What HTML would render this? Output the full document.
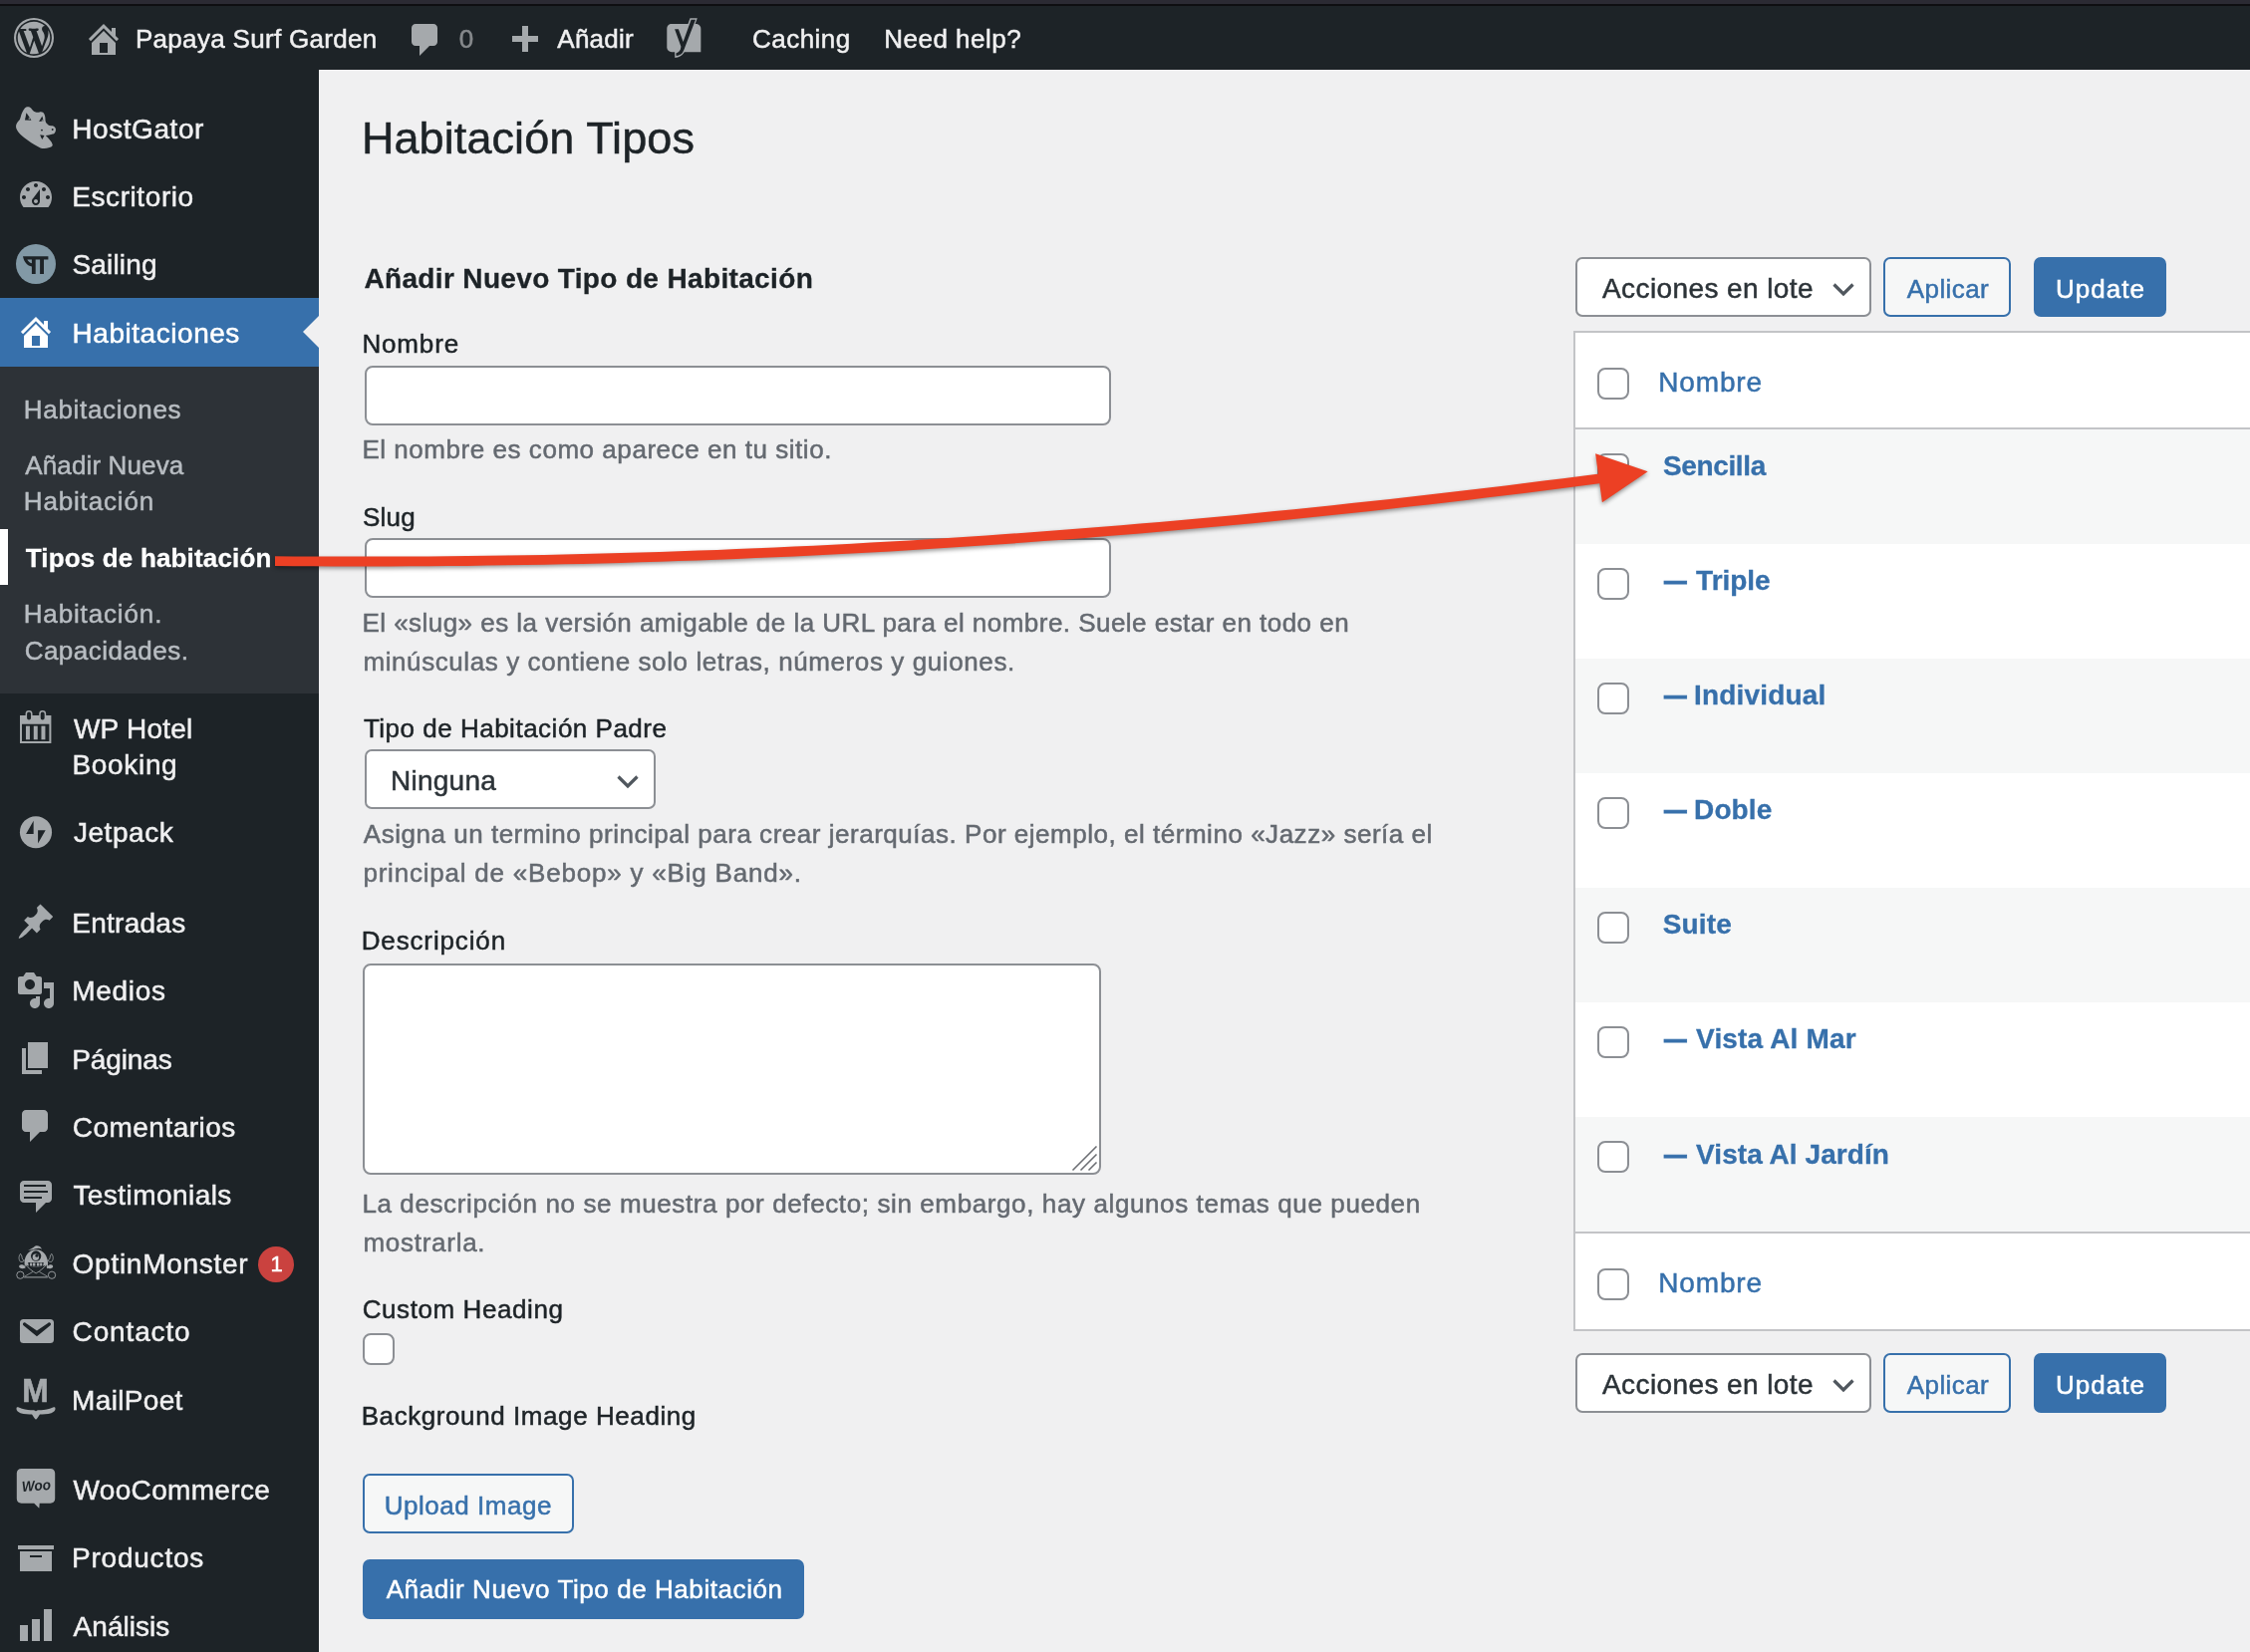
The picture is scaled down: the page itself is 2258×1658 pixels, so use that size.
<!DOCTYPE html>
<html lang="es">
<head>
<meta charset="utf-8">
<title>Habitación Tipos ‹ Papaya Surf Garden — WordPress</title>
<style>
*{box-sizing:border-box;margin:0;padding:0}
html{background:#f0f0f1}
body{width:2258px;height:1658px;overflow:hidden;background:#f0f0f1}
body{font-family:"Liberation Sans",sans-serif;position:relative}
.t{position:absolute;white-space:nowrap;display:block;-webkit-text-stroke:0.5px currentColor}
.k{font-weight:700;-webkit-text-stroke-width:0.3px}
.b{position:absolute}
svg{position:absolute;display:block;overflow:visible}
.ic{fill:#a5a9ac}
.inp{background:#fff;border:2px solid #8c8f94;border-radius:8px}
.sel{background:#fff;border:2px solid #8c8f94;border-radius:7px}
.cb{background:#fff;border:2px solid #8c8f94;border-radius:8px}
.btn{border:2px solid #3770ab;border-radius:7px;background:#f6f7f7}
.pri{border:2px solid #3770ab;border-radius:7px;background:#3770ab}
</style>
</head>
<body>
<div id="wpwrap" style="position:absolute;left:0;top:0;width:2258px;height:1658px;overflow:hidden;will-change:transform">

<div class="b" style="left:0px;top:0px;width:2258px;height:4px;background:#2b2a33"></div>
<div class="b" style="left:0px;top:4px;width:2258px;height:2px;background:#0e0e11"></div>
<div id="wpadminbar" class="b" style="left:0;top:6px;width:2258px;height:64px;background:#1d2327"></div>
<div id="adminmenuback" class="b" style="left:0;top:70px;width:320px;height:1588px;background:#1d2327"></div>
<div class="b" style="left:0px;top:299px;width:320px;height:69px;background:#3770ab"></div>
<div class="b" style="left:0px;top:368px;width:320px;height:328px;background:#2d3237"></div>
<div class="b" style="left:0px;top:531px;width:8px;height:56px;background:#fff"></div>
<div class="b" style="left:288px;top:317px;width:0;height:0;border:16px solid transparent;border-right-color:#f0f0f1"></div>
<svg viewBox="0 0 20 20" style="left:14px;top:18px;width:40px;height:40px;fill:#a5a9ac"><path fill-rule="evenodd" d="M10 0a10 10 0 1 0 0 20a10 10 0 1 0 0-20zM10 1.05a8.95 8.95 0 1 1 0 17.9a8.95 8.95 0 1 1 0-17.9z"/><g transform="translate(10 10) scale(0.915) translate(-10 -10)"><path d="M7.78 15.37L4.37 6.22c.55-.02 1.17-.08 1.17-.08.5-.06.44-1.13-.06-1.11 0 0-1.45.11-2.37.11-.18 0-.37 0-.58-.01C4.12 2.69 6.87 1.11 10 1.11c2.33 0 4.45.87 6.05 2.34-.68-.11-1.65.39-1.65 1.58 0 .74.45 1.36.9 2.1.35.61.55 1.36.55 2.46 0 1.49-1.4 5-1.4 5l-3.03-8.37c.54-.02.82-.17.82-.17.5-.05.44-1.25-.06-1.22 0 0-1.44.12-2.38.12-.87 0-2.33-.12-2.33-.12-.5-.03-.56 1.2-.06 1.22l.92.08 1.26 3.41zM17.41 10c.24-.64.74-1.87.43-4.25.7 1.29 1.05 2.71 1.05 4.25 0 3.29-1.73 6.24-4.4 7.78.97-2.59 1.94-5.2 2.92-7.78zM6.1 18.09C3.12 16.65 1.11 13.53 1.11 10c0-1.3.23-2.48.72-3.59C3.25 10.3 4.67 14.2 6.1 18.09zm4.03-6.63l2.58 6.98c-.86.29-1.76.45-2.71.45-.79 0-1.57-.11-2.29-.33.81-2.38 1.62-4.74 2.42-7.1z"/></g></svg>
<svg viewBox="0 0 20 20" style="left:84px;top:18.6px;width:40px;height:40px;fill:#a5a9ac"><path d="M16 8.5l1.53 1.53-1.06 1.06L10 4.62l-6.47 6.47-1.06-1.06L10 2.5l4 4v-2h2v4zm-6-2.46l6 5.99V18H4v-5.97zM12 17v-5H8v5h4z"/></svg>
<svg viewBox="0 0 20 20" style="left:407.4px;top:19.7px;width:40px;height:40px;fill:#a5a9ac"><path d="M5 2h9c1.1 0 2 .9 2 2v7c0 1.1-.9 2-2 2h-2l-5 5v-5H5c-1.1 0-2-.9-2-2V4c0-1.1.9-2 2-2z"/></svg>
<svg viewBox="0 0 20 20" style="left:505.6px;top:22px;width:40px;height:40px;fill:#a5a9ac"><path d="M17 7v3h-5v5H9v-5H4V7h5V2h3v5h5z"/></svg>
<svg viewBox="0 0 34.4 40.4" style="left:668.8px;top:17.8px;width:34.4px;height:40.4px;fill:#a5a9ac"><path d="M4.9 6.05H29.6C32.3 6.05 34.35 8.2 34.35 10.9V34.15H5.1C2.4 34.15 0.28 32 0.28 29.3V10.7C0.28 8.1 2.3 6.05 4.9 6.05Z"/><path d="M23.5 0.2L30.8 0.2L20.2 28.8C19 32 18 34 17 35.5C15 38 12.5 39.5 8.3 40L8.1 34.3L13 30L15 24Z"/><path d="M24.6 1.8L29 1.8L18.8 28.3C17.9 31 16.9 33.2 15.9 34.9C14.3 36.6 12.3 37.5 9.6 38.1L9.4 35.4C11.5 34.8 13 33.5 13.9 31.5L14.4 28.7L8.1 11.3L11.9 11.3L16.6 24Z" fill="#1d2327"/></svg>
<svg viewBox="275 240 1100 1165" style="left:16px;top:106.7px;width:40px;height:42.3px;fill:#a5a9ac"><path d="M275 770C280 720 330 650 380 600C400 560 410 510 420 470C440 410 470 340 520 280C560 240 640 230 690 280C710 300 725 325 740 340C760 365 780 380 800 385C830 395 870 405 900 400C920 385 980 370 1020 400C1050 425 1070 470 1080 520C1088 560 1085 610 1090 640C1095 665 1105 685 1120 700C1150 730 1180 755 1200 760C1230 768 1265 765 1290 770C1320 778 1340 795 1350 810C1370 835 1378 860 1375 880C1375 910 1365 940 1350 960C1335 985 1310 1000 1290 1000C1230 1020 1160 1035 1100 1040C1140 1075 1170 1110 1200 1150C1230 1185 1260 1220 1270 1250C1290 1290 1290 1310 1280 1320C1260 1350 1230 1365 1200 1370C1150 1390 1100 1400 1050 1400C1010 1400 980 1395 950 1380C900 1360 850 1330 800 1300C730 1260 660 1215 600 1170C530 1120 460 1065 400 1010C360 970 325 925 300 880C280 845 272 805 275 770Z"/><path d="M560 410C600 460 660 540 700 620L520 610C540 540 550 470 560 410ZM1000 500C1015 545 1025 590 1030 640L910 650C940 600 970 550 1000 500ZM940 1020L1060 1040L1000 1150C975 1110 955 1065 940 1020ZM1100 1045L1320 1025C1310 1065 1290 1100 1260 1125C1210 1095 1150 1070 1100 1045Z" fill="#1d2327"/><circle cx="990" cy="890" r="26" fill="#1d2327"/><circle cx="1285" cy="875" r="26" fill="#1d2327"/><circle cx="640" cy="570" r="22"/><circle cx="1000" cy="625" r="18"/></svg>
<svg style="left:16px;top:176px;width:40px;height:40px;fill:#a5a9ac" viewBox="0 0 20 20"><path d="M3.76 16h12.48c1.1-1.37 1.76-3.11 1.76-5 0-4.42-3.58-8-8-8s-8 3.58-8 8c0 1.89.66 3.63 1.76 5zM10 4c.55 0 1 .45 1 1s-.45 1-1 1-1-.45-1-1 .45-1 1-1zM6 6c.55 0 1 .45 1 1s-.45 1-1 1-1-.45-1-1 .45-1 1-1zm8 0c.55 0 1 .45 1 1s-.45 1-1 1-1-.45-1-1 .45-1 1-1zm-5.37 5.55L12 7v6c0 1.1-.9 2-2 2s-2-.9-2-2c0-.57.24-1.08.63-1.45zM4 10c.55 0 1 .45 1 1s-.45 1-1 1-1-.45-1-1 .45-1 1-1zm12 0c.55 0 1 .45 1 1s-.45 1-1 1-1-.45-1-1 .45-1 1-1zm-5 3c0-.55-.45-1-1-1s-1 .45-1 1 .45 1 1 1 1-.45 1-1z"/></svg>
<svg viewBox="0 0 40 40" style="left:16px;top:244.8px;width:40px;height:40px"><circle cx="20" cy="20" r="20" fill="#8299a6"/><path d="M7 12.3H32.4V15.6H28V30.1H24.1V15.6H19.7V30.1H15.9V22.6C11.5 21.8 8 18 7 12.3ZM11.4 15.6C12.2 17.4 13.8 18.8 15.9 19.3V15.6Z" fill="#1d2327" fill-rule="evenodd"/></svg>
<svg style="left:16px;top:313px;width:40px;height:40px;fill:#fff" viewBox="0 0 20 20"><path d="M16 8.5l1.53 1.53-1.06 1.06L10 4.62l-6.47 6.47-1.06-1.06L10 2.5l4 4v-2h2v4zm-6-2.46l6 5.99V18H4v-5.97zM12 17v-5H8v5h4z"/></svg>
<svg viewBox="157 174 253 266" style="left:20.3px;top:713px;width:31.4px;height:33px;fill:#a5a9ac"><path d="M157 215H410V440H157ZM173 285V424H394V285Z" fill-rule="evenodd"/><rect x="205" y="300" width="32" height="110"/><rect x="268" y="300" width="32" height="110"/><rect x="330" y="300" width="32" height="110"/><rect x="208" y="180" width="44" height="76" rx="22" fill="#1d2327" stroke="#a5a9ac" stroke-width="12"/><rect x="318" y="180" width="44" height="76" rx="22" fill="#1d2327" stroke="#a5a9ac" stroke-width="12"/></svg>
<svg viewBox="157 1013 253 255" style="left:20px;top:818.7px;width:32px;height:32.4px;fill:#a5a9ac"><circle cx="283.5" cy="1140.5" r="127"/><path d="M265 1050V1155H205ZM300 1125H360L300 1230Z" fill="#1d2327"/></svg>
<svg style="left:16px;top:905px;width:40px;height:40px;fill:#a5a9ac" viewBox="0 0 20 20"><path d="M10.44 3.02l1.82-1.82 6.36 6.35-1.83 1.82c-1.05-.68-2.48-.57-3.41.36l-.75.75c-.92.93-1.04 2.35-.35 3.41l-1.83 1.82-2.41-2.41-2.8 2.79c-.42.42-3.38 2.71-3.8 2.29s1.86-3.39 2.28-3.81l2.79-2.79L4.1 9.36l1.83-1.82c1.05.69 2.48.57 3.4-.36l.75-.75c.93-.92 1.05-2.35.36-3.41z"/></svg>
<svg style="left:16px;top:974px;width:40px;height:40px;fill:#a5a9ac" viewBox="0 0 20 20"><path d="M13 11V4c0-.55-.45-1-1-1h-1.67L9 1H5L3.67 3H2c-.55 0-1 .45-1 1v7c0 .55.45 1 1 1h10c.55 0 1-.45 1-1zM7 4.5c1.38 0 2.5 1.12 2.5 2.5S8.38 9.5 7 9.5 4.5 8.38 4.5 7 5.62 4.5 7 4.5zM14 6h5v10.5c0 1.38-1.12 2.5-2.5 2.5S14 17.88 14 16.5s1.12-2.5 2.5-2.5c.17 0 .34.02.5.05V9h-3V6zm-4 8.05V13h2v3.5c0 1.38-1.12 2.5-2.5 2.5S7 17.88 7 16.5 8.12 14 9.5 14c.17 0 .34.02.5.05z"/></svg>
<svg style="left:16px;top:1042px;width:40px;height:40px;fill:#a5a9ac" viewBox="0 0 20 20"><path d="M6 15V2h10v13H6zm-1 1h8v2H3V5h2v11z"/></svg>
<svg style="left:16px;top:1110px;width:40px;height:40px;fill:#a5a9ac" viewBox="0 0 20 20"><path d="M5 2h9c1.1 0 2 .9 2 2v7c0 1.1-.9 2-2 2h-2l-5 5v-5H5c-1.1 0-2-.9-2-2V4c0-1.1.9-2 2-2z"/></svg>
<svg style="left:16px;top:1179px;width:40px;height:40px;fill:#a5a9ac" viewBox="0 0 20 20"><path d="M4 3h12c.55 0 1.02.2 1.41.59S18 4.45 18 5v7c0 .55-.2 1.02-.59 1.41S16.55 14 16 14h-1l-5 5v-5H4c-.55 0-1.02-.2-1.41-.59S2 12.55 2 12V5c0-.55.2-1.02.59-1.41S3.45 3 4 3zm11 2H4v1h11V5zm1 3H4v1h12V8zm-3 3H4v1h9v-1z"/></svg>
<svg viewBox="275 330 1110 940" style="left:16px;top:1250px;width:40.3px;height:34.1px;fill:#a5a9ac"><path d="M610 470C700 420 760 390 800 350C860 320 950 340 990 430C940 400 880 395 820 420C760 440 690 460 610 470Z"/><path d="M520 900C480 740 560 450 830 450C1100 450 1190 740 1150 900C1230 830 1300 860 1300 910C1300 960 1230 990 1150 960L1100 1000H560L520 960C440 990 360 960 360 910C360 860 440 830 520 900Z"/><path d="M400 560C350 620 340 720 400 780C450 790 490 770 510 740C470 740 440 700 440 640C430 610 420 580 400 560Z" fill="#1d2327" stroke="#a5a9ac" stroke-width="22" stroke-linejoin="round"/><path d="M1260 560C1310 620 1320 720 1260 780C1210 790 1170 770 1150 740C1190 740 1220 700 1220 640C1230 610 1240 580 1260 560Z" fill="#1d2327" stroke="#a5a9ac" stroke-width="22" stroke-linejoin="round"/><circle cx="830" cy="620" r="142" fill="#1d2327"/><circle cx="822" cy="655" r="88"/><circle cx="852" cy="612" r="42" fill="#1d2327"/><path d="M610 800H1040L1020 910H630Z" fill="#1d2327"/><rect x="662" y="812" width="60" height="86"/><rect x="742" y="812" width="68" height="86"/><rect x="852" y="812" width="68" height="86"/><rect x="940" y="812" width="58" height="86"/><path d="M540 870C600 900 700 915 830 915C960 915 1060 900 1120 870L1150 1190H500Z" fill="#1d2327"/><path d="M545 870C620 950 720 1040 830 1100C940 1040 1040 950 1115 870" fill="none" stroke="#a5a9ac" stroke-width="22"/><path d="M510 1190L740 1060M1150 1190L920 1060" fill="none" stroke="#a5a9ac" stroke-width="20"/><path d="M500 1210H1150" fill="none" stroke="#a5a9ac" stroke-width="28"/><circle cx="395" cy="1150" r="100" fill="#1d2327" stroke="#a5a9ac" stroke-width="24"/><circle cx="1268" cy="1150" r="100" fill="#1d2327" stroke="#a5a9ac" stroke-width="24"/></svg>
<svg style="left:16px;top:1316px;width:40px;height:40px;fill:#a5a9ac" viewBox="0 0 20 20"><path d="M3.87 4h13.25C18.37 4 19 4.59 19 5.79v8.42c0 1.19-.63 1.79-1.88 1.79H3.87c-1.25 0-1.88-.6-1.88-1.79V5.79c0-1.2.63-1.79 1.88-1.79zm6.62 8.6l6.74-5.53c.24-.2.43-.66.13-1.07-.29-.41-.82-.42-1.17-.17l-5.7 3.86L4.8 5.83c-.35-.25-.88-.24-1.17.17-.3.41-.11.87.13 1.07z"/></svg>
<svg viewBox="0 0 40 48" style="left:16px;top:1378px;width:40px;height:48px;fill:#a5a9ac"><text x="19.6" y="28.8" text-anchor="middle" font-family="Liberation Sans,sans-serif" font-weight="700" font-size="32.5" textLength="26.5" stroke="#a5a9ac" stroke-width="0.6" lengthAdjust="spacingAndGlyphs">M</text><path d="M0.5 35.5C0.5 34.5 1.5 34 2.8 34.6C8 37 13 37.5 17 37.2C18.6 37.2 19.6 37.8 20 38.6C20.4 37.8 21.4 37.2 23 37.2C27 37.5 32 37 37.2 34.6C38.5 34 39.5 34.5 39.5 35.5C39.8 37.5 38 39.3 35.5 40.2C31.5 41.5 27 41.3 24 41.5C22.5 43.5 21.5 45.5 20 46.8C18.5 45.5 17.5 43.5 16 41.5C13 41.3 8.5 41.5 4.5 40.2C2 39.3 0.2 37.5 0.5 35.5Z"/></svg>
<svg viewBox="0 0 40 42" style="left:16px;top:1473px;width:40px;height:42px;fill:#a5a9ac"><path d="M5.5 0.9H34.5C37.3 0.9 39.2 2.8 39.2 5.6V31C39.2 33.8 37.3 35.7 34.5 35.7H23.7L23.3 40.8L18.2 35.7H5.5C2.7 35.7 0.8 33.8 0.8 31V5.6C0.8 2.8 2.7 0.9 5.5 0.9Z"/><text x="20.3" y="23" text-anchor="middle" font-family="Liberation Sans,sans-serif" font-weight="700" font-style="italic" font-size="14.5" fill="#1d2327" textLength="29" lengthAdjust="spacingAndGlyphs" transform="rotate(-4 20 18)">Woo</text></svg>
<svg style="left:16px;top:1543px;width:40px;height:40px;fill:#a5a9ac" viewBox="0 0 20 20"><path d="M19 4v2H1V4h18zM2 7h16v10H2V7zm11 3V9H7v1h6z"/></svg>
<svg style="left:16px;top:1611px;width:40px;height:40px;fill:#a5a9ac" viewBox="0 0 20 20"><path d="M18 18V2h-4v16h4zm-6 0V7H8v11h4zm-6 0v-8H2v8h4z"/></svg>
<div class="b" style="left:259px;top:1251px;width:36px;height:36px;background:#ca423f;border-radius:18px"></div>
<div class="b inp" style="left:366px;top:367px;width:749px;height:60px;"></div>
<div class="b inp" style="left:366px;top:540px;width:749px;height:60px;"></div>
<div class="b sel" style="left:366px;top:752px;width:292px;height:60px;"></div>
<div class="b inp" style="left:364px;top:967px;width:741px;height:212px;"></div>
<div class="b cb" style="left:364px;top:1338px;width:32px;height:32px;"></div>
<div class="b btn" style="left:364px;top:1479px;width:212px;height:60px;"></div>
<div class="b pri" style="left:364px;top:1565px;width:443px;height:60px;"></div>
<svg viewBox="0 0 22 13" style="left:619px;top:777.5px;width:22px;height:13px"><path d="M1.5 1.5L11 11L20.5 1.5" fill="none" stroke="#50575e" stroke-width="3.2"/></svg>
<svg viewBox="0 0 26 26" style="left:1076px;top:1150px;width:26px;height:26px"><path d="M0.5 24.5L24.5 0.5M8.5 24.5L24.5 8.5M16.5 24.5L24.5 16.5" fill="none" stroke="#6b6e73" stroke-width="1.6"/></svg>
<div class="b sel" style="left:1581px;top:258px;width:297px;height:60px;"></div>
<svg viewBox="0 0 22 13" style="left:1839px;top:283.5px;width:22px;height:13px"><path d="M1.5 1.5L11 11L20.5 1.5" fill="none" stroke="#50575e" stroke-width="3.2"/></svg>
<div class="b btn" style="left:1890px;top:258px;width:128px;height:60px;"></div>
<div class="b pri" style="left:2041px;top:258px;width:133px;height:60px;"></div>
<div class="b sel" style="left:1581px;top:1358px;width:297px;height:60px;"></div>
<svg viewBox="0 0 22 13" style="left:1839px;top:1383.5px;width:22px;height:13px"><path d="M1.5 1.5L11 11L20.5 1.5" fill="none" stroke="#50575e" stroke-width="3.2"/></svg>
<div class="b btn" style="left:1890px;top:1358px;width:128px;height:60px;"></div>
<div class="b pri" style="left:2041px;top:1358px;width:133px;height:60px;"></div>
<div class="b" style="left:1579px;top:332px;width:721px;height:1004px;background:#fff;border:2px solid #c3c4c7"></div>
<div class="b" style="left:1581px;top:430px;width:719px;height:116px;background:#f6f7f7"></div>
<div class="b" style="left:1581px;top:661px;width:719px;height:115px;background:#f6f7f7"></div>
<div class="b" style="left:1581px;top:891px;width:719px;height:115px;background:#f6f7f7"></div>
<div class="b" style="left:1581px;top:1121px;width:719px;height:115px;background:#f6f7f7"></div>
<div class="b" style="left:1581px;top:429px;width:719px;height:2px;background:#c3c4c7"></div>
<div class="b" style="left:1581px;top:1236px;width:719px;height:2px;background:#c3c4c7"></div>
<div class="b cb" style="left:1603px;top:369px;width:32px;height:32px;"></div>
<div class="b cb" style="left:1603px;top:1273px;width:32px;height:32px;"></div>
<div class="b cb" style="left:1603px;top:455px;width:32px;height:32px;"></div>
<div class="b cb" style="left:1603px;top:570px;width:32px;height:32px;"></div>
<div class="b cb" style="left:1603px;top:685px;width:32px;height:32px;"></div>
<div class="b cb" style="left:1603px;top:800px;width:32px;height:32px;"></div>
<div class="b cb" style="left:1603px;top:915px;width:32px;height:32px;"></div>
<div class="b cb" style="left:1603px;top:1030px;width:32px;height:32px;"></div>
<div class="b cb" style="left:1603px;top:1145px;width:32px;height:32px;"></div>
<span class="t" style="left:135.90px;top:26px;font-size:26px;line-height:26px;color:#f0f0f1;letter-spacing:0.317px">Papaya Surf Garden</span>
<span class="t" style="left:460.80px;top:26px;font-size:26px;line-height:26px;color:#86898c;letter-spacing:0.000px">0</span>
<span class="t" style="left:559.30px;top:26px;font-size:26px;line-height:26px;color:#f0f0f1;letter-spacing:0.240px">Añadir</span>
<span class="t" style="left:755.10px;top:26px;font-size:26px;line-height:26px;color:#f0f0f1;letter-spacing:0.449px">Caching</span>
<span class="t" style="left:887.20px;top:26px;font-size:26px;line-height:26px;color:#f0f0f1;letter-spacing:0.500px">Need help?</span>
<span class="t" style="left:72.20px;top:116px;font-size:28px;line-height:28px;color:#f0f0f1;letter-spacing:0.575px">HostGator</span>
<span class="t" style="left:72.20px;top:184px;font-size:28px;line-height:28px;color:#f0f0f1;letter-spacing:0.589px">Escritorio</span>
<span class="t" style="left:72.50px;top:252px;font-size:28px;line-height:28px;color:#f0f0f1;letter-spacing:0.167px">Sailing</span>
<span class="t" style="left:72.50px;top:321px;font-size:28px;line-height:28px;color:#fff;letter-spacing:0.545px">Habitaciones</span>
<span class="t" style="left:23.80px;top:398px;font-size:26px;line-height:26px;color:#b8bdc2;letter-spacing:0.682px">Habitaciones</span>
<span class="t" style="left:25.30px;top:454px;font-size:26px;line-height:26px;color:#b8bdc2;letter-spacing:0.128px">Añadir Nueva</span>
<span class="t" style="left:23.80px;top:490px;font-size:26px;line-height:26px;color:#b8bdc2;letter-spacing:0.833px">Habitación</span>
<span class="t k" style="left:25.70px;top:547px;font-size:26px;line-height:26px;color:#fff;letter-spacing:0.172px">Tipos de habitación</span>
<span class="t" style="left:23.70px;top:603px;font-size:26px;line-height:26px;color:#b8bdc2;letter-spacing:0.860px">Habitación.</span>
<span class="t" style="left:24.70px;top:640px;font-size:26px;line-height:26px;color:#b8bdc2;letter-spacing:0.472px">Capacidades.</span>
<span class="t" style="left:73.90px;top:718px;font-size:28px;line-height:28px;color:#f0f0f1;letter-spacing:0.229px">WP Hotel</span>
<span class="t" style="left:72.50px;top:754px;font-size:28px;line-height:28px;color:#f0f0f1;letter-spacing:0.667px">Booking</span>
<span class="t" style="left:73.90px;top:822px;font-size:28px;line-height:28px;color:#f0f0f1;letter-spacing:0.551px">Jetpack</span>
<span class="t" style="left:72.20px;top:913px;font-size:28px;line-height:28px;color:#f0f0f1;letter-spacing:0.272px">Entradas</span>
<span class="t" style="left:72.20px;top:981px;font-size:28px;line-height:28px;color:#f0f0f1;letter-spacing:0.720px">Medios</span>
<span class="t" style="left:72.20px;top:1050px;font-size:28px;line-height:28px;color:#f0f0f1;letter-spacing:-0.100px">Páginas</span>
<span class="t" style="left:72.80px;top:1118px;font-size:28px;line-height:28px;color:#f0f0f1;letter-spacing:0.470px">Comentarios</span>
<span class="t" style="left:73.40px;top:1186px;font-size:28px;line-height:28px;color:#f0f0f1;letter-spacing:0.445px">Testimonials</span>
<span class="t" style="left:72.60px;top:1255px;font-size:28px;line-height:28px;color:#f0f0f1;letter-spacing:0.727px">OptinMonster</span>
<span class="t" style="left:72.60px;top:1323px;font-size:28px;line-height:28px;color:#f0f0f1;letter-spacing:0.857px">Contacto</span>
<span class="t" style="left:72.10px;top:1392px;font-size:28px;line-height:28px;color:#f0f0f1;letter-spacing:0.328px">MailPoet</span>
<span class="t" style="left:73.60px;top:1482px;font-size:28px;line-height:28px;color:#f0f0f1;letter-spacing:0.320px">WooCommerce</span>
<span class="t" style="left:72.10px;top:1550px;font-size:28px;line-height:28px;color:#f0f0f1;letter-spacing:0.761px">Productos</span>
<span class="t" style="left:73.60px;top:1619px;font-size:28px;line-height:28px;color:#f0f0f1;letter-spacing:0.042px">Análisis</span>
<span class="t" style="left:362.90px;top:116px;font-size:45px;line-height:45px;color:#1d2327;letter-spacing:0.087px">Habitación Tipos</span>
<span class="t k" style="left:365.40px;top:266px;font-size:28px;line-height:28px;color:#1d2327;letter-spacing:0.353px">Añadir Nuevo Tipo de Habitación</span>
<span class="t" style="left:363.40px;top:332px;font-size:26px;line-height:26px;color:#1d2327;letter-spacing:0.860px">Nombre</span>
<span class="t" style="left:363.90px;top:506px;font-size:26px;line-height:26px;color:#1d2327;letter-spacing:0.267px">Slug</span>
<span class="t" style="left:364.90px;top:718px;font-size:26px;line-height:26px;color:#1d2327;letter-spacing:0.505px">Tipo de Habitación Padre</span>
<span class="t" style="left:362.70px;top:931px;font-size:26px;line-height:26px;color:#1d2327;letter-spacing:0.860px">Descripción</span>
<span class="t" style="left:363.70px;top:1301px;font-size:26px;line-height:26px;color:#1d2327;letter-spacing:0.584px">Custom Heading</span>
<span class="t" style="left:362.70px;top:1408px;font-size:26px;line-height:26px;color:#1d2327;letter-spacing:0.578px">Background Image Heading</span>
<span class="t" style="left:363.40px;top:438px;font-size:26px;line-height:26px;color:#646970;letter-spacing:0.543px">El nombre es como aparece en tu sitio.</span>
<span class="t" style="left:363.40px;top:612px;font-size:26px;line-height:26px;color:#646970;letter-spacing:0.466px">El «slug» es la versión amigable de la URL para el nombre. Suele estar en todo en</span>
<span class="t" style="left:364.40px;top:651px;font-size:26px;line-height:26px;color:#646970;letter-spacing:0.595px">minúsculas y contiene solo letras, números y guiones.</span>
<span class="t" style="left:364.80px;top:824px;font-size:26px;line-height:26px;color:#646970;letter-spacing:0.522px">Asigna un termino principal para crear jerarquías. Por ejemplo, el término «Jazz» sería el</span>
<span class="t" style="left:364.40px;top:863px;font-size:26px;line-height:26px;color:#646970;letter-spacing:0.791px">principal de «Bebop» y «Big Band».</span>
<span class="t" style="left:363.40px;top:1195px;font-size:26px;line-height:26px;color:#646970;letter-spacing:0.610px">La descripción no se muestra por defecto; sin embargo, hay algunos temas que pueden</span>
<span class="t" style="left:364.40px;top:1234px;font-size:26px;line-height:26px;color:#646970;letter-spacing:0.733px">mostrarla.</span>
<span class="t" style="left:392.10px;top:770px;font-size:28px;line-height:28px;color:#2c3338;letter-spacing:0.233px">Ninguna</span>
<span class="t" style="left:1608.00px;top:276px;font-size:28px;line-height:28px;color:#2c3338;letter-spacing:0.407px">Acciones en lote</span>
<span class="t" style="left:1913.80px;top:277px;font-size:26px;line-height:26px;color:#3770ab;letter-spacing:0.401px">Aplicar</span>
<span class="t" style="left:2062.90px;top:277px;font-size:26px;line-height:26px;color:#fff;letter-spacing:1.040px">Update</span>
<span class="t" style="left:1608.00px;top:1376px;font-size:28px;line-height:28px;color:#2c3338;letter-spacing:0.407px">Acciones en lote</span>
<span class="t" style="left:1913.80px;top:1377px;font-size:26px;line-height:26px;color:#3770ab;letter-spacing:0.401px">Aplicar</span>
<span class="t" style="left:2062.90px;top:1377px;font-size:26px;line-height:26px;color:#fff;letter-spacing:1.040px">Update</span>
<span class="t" style="left:385.70px;top:1498px;font-size:26px;line-height:26px;color:#3770ab;letter-spacing:0.536px">Upload Image</span>
<span class="t" style="left:387.70px;top:1582px;font-size:26px;line-height:26px;color:#fff;letter-spacing:0.573px">Añadir Nuevo Tipo de Habitación</span>
<span class="t" style="left:1664.30px;top:370px;font-size:28px;line-height:28px;color:#3770ab;letter-spacing:0.840px">Nombre</span>
<span class="t" style="left:1664.30px;top:1274px;font-size:28px;line-height:28px;color:#3770ab;letter-spacing:0.840px">Nombre</span>
<span class="t k" style="left:1669.00px;top:454px;font-size:28px;line-height:28px;color:#3770ab;letter-spacing:-0.372px">Sencilla</span>
<span class="t k" style="left:1670.00px;top:569px;font-size:28px;line-height:28px;color:#3770ab;letter-spacing:0.000px;-webkit-text-stroke-width:0.9px;transform-origin:0 0;transform:scaleX(0.811)">—</span>
<span class="t k" style="left:1702.10px;top:569px;font-size:28px;line-height:28px;color:#3770ab;letter-spacing:-0.020px">Triple</span>
<span class="t k" style="left:1670.00px;top:684px;font-size:28px;line-height:28px;color:#3770ab;letter-spacing:0.000px;-webkit-text-stroke-width:0.9px;transform-origin:0 0;transform:scaleX(0.811)">—</span>
<span class="t k" style="left:1700.10px;top:684px;font-size:28px;line-height:28px;color:#3770ab;letter-spacing:0.167px">Individual</span>
<span class="t k" style="left:1670.00px;top:799px;font-size:28px;line-height:28px;color:#3770ab;letter-spacing:0.000px;-webkit-text-stroke-width:0.9px;transform-origin:0 0;transform:scaleX(0.811)">—</span>
<span class="t k" style="left:1700.10px;top:799px;font-size:28px;line-height:28px;color:#3770ab;letter-spacing:0.100px">Doble</span>
<span class="t k" style="left:1668.70px;top:914px;font-size:28px;line-height:28px;color:#3770ab;letter-spacing:0.200px">Suite</span>
<span class="t k" style="left:1670.00px;top:1029px;font-size:28px;line-height:28px;color:#3770ab;letter-spacing:0.000px;-webkit-text-stroke-width:0.9px;transform-origin:0 0;transform:scaleX(0.811)">—</span>
<span class="t k" style="left:1702.10px;top:1029px;font-size:28px;line-height:28px;color:#3770ab;letter-spacing:0.164px">Vista Al Mar</span>
<span class="t k" style="left:1670.00px;top:1145px;font-size:28px;line-height:28px;color:#3770ab;letter-spacing:0.000px;-webkit-text-stroke-width:0.9px;transform-origin:0 0;transform:scaleX(0.811)">—</span>
<span class="t k" style="left:1702.10px;top:1145px;font-size:28px;line-height:28px;color:#3770ab;letter-spacing:0.056px">Vista Al Jardín</span>
<span class="t" style="left:271.60px;top:1258px;font-size:22px;line-height:22px;color:#fff;letter-spacing:0.000px">1</span>
<svg viewBox="0 0 2258 1658" style="left:0;top:0;width:2258px;height:1658px;filter:drop-shadow(0 2px 2px rgba(0,0,0,.42))"><path d="M276.0 558.2L295.3 558.4L314.6 558.5L333.9 558.6L353.2 558.6L372.4 558.6L391.7 558.6L411.0 558.5L430.3 558.4L449.6 558.2L468.9 558.1L488.2 557.8L507.5 557.5L526.8 557.2L546.1 556.9L565.3 556.5L584.6 556.1L603.9 555.6L623.2 555.1L642.5 554.5L661.8 553.9L681.1 553.3L700.4 552.6L719.7 551.9L739.0 551.1L758.2 550.3L777.5 549.5L796.8 548.6L816.1 547.7L835.4 546.7L854.7 545.7L874.0 544.6L893.3 543.5L912.6 542.4L931.9 541.2L951.1 540.0L970.4 538.8L989.7 537.5L1009.0 536.1L1028.3 534.7L1047.6 533.3L1066.9 531.8L1086.2 530.3L1105.5 528.8L1124.8 527.2L1144.0 525.6L1163.3 523.9L1182.6 522.2L1201.9 520.5L1221.2 518.7L1240.5 516.9L1259.8 515.0L1279.1 513.1L1298.4 511.2L1317.7 509.2L1336.9 507.2L1356.2 505.1L1375.5 503.0L1394.8 500.9L1414.1 498.8L1433.4 496.6L1452.7 494.3L1472.0 492.1L1491.3 489.8L1510.6 487.4L1529.8 485.0L1549.1 482.6L1568.4 480.2L1587.7 477.7L1607.0 475.2L1607.0 485.1L1587.7 487.6L1568.4 490.1L1549.1 492.5L1529.8 494.9L1510.6 497.3L1491.3 499.6L1472.0 501.9L1452.7 504.2L1433.4 506.4L1414.1 508.6L1394.8 510.8L1375.5 512.9L1356.2 515.0L1336.9 517.0L1317.7 519.1L1298.4 521.0L1279.1 523.0L1259.8 524.9L1240.5 526.7L1221.2 528.5L1201.9 530.3L1182.6 532.1L1163.3 533.8L1144.0 535.4L1124.8 537.1L1105.5 538.6L1086.2 540.2L1066.9 541.7L1047.6 543.1L1028.3 544.6L1009.0 545.9L989.7 547.3L970.4 548.6L951.1 549.8L931.9 551.0L912.6 552.2L893.3 553.4L874.0 554.4L854.7 555.5L835.4 556.5L816.1 557.5L796.8 558.4L777.5 559.3L758.2 560.1L739.0 560.9L719.7 561.7L700.4 562.4L681.1 563.1L661.8 563.7L642.5 564.3L623.2 564.9L603.9 565.4L584.6 565.9L565.3 566.3L546.1 566.7L526.8 567.0L507.5 567.3L488.2 567.6L468.9 567.9L449.6 568.0L430.3 568.2L411.0 568.3L391.7 568.4L372.4 568.4L353.2 568.4L333.9 568.4L314.6 568.3L295.3 568.2L276.0 568.0Z" fill="#ec4024"/><path d="M1601.1 455.3L1653.7 473.3L1607.9 504.3Z" fill="#ec4024"/></svg>
</div>
</body></html>
